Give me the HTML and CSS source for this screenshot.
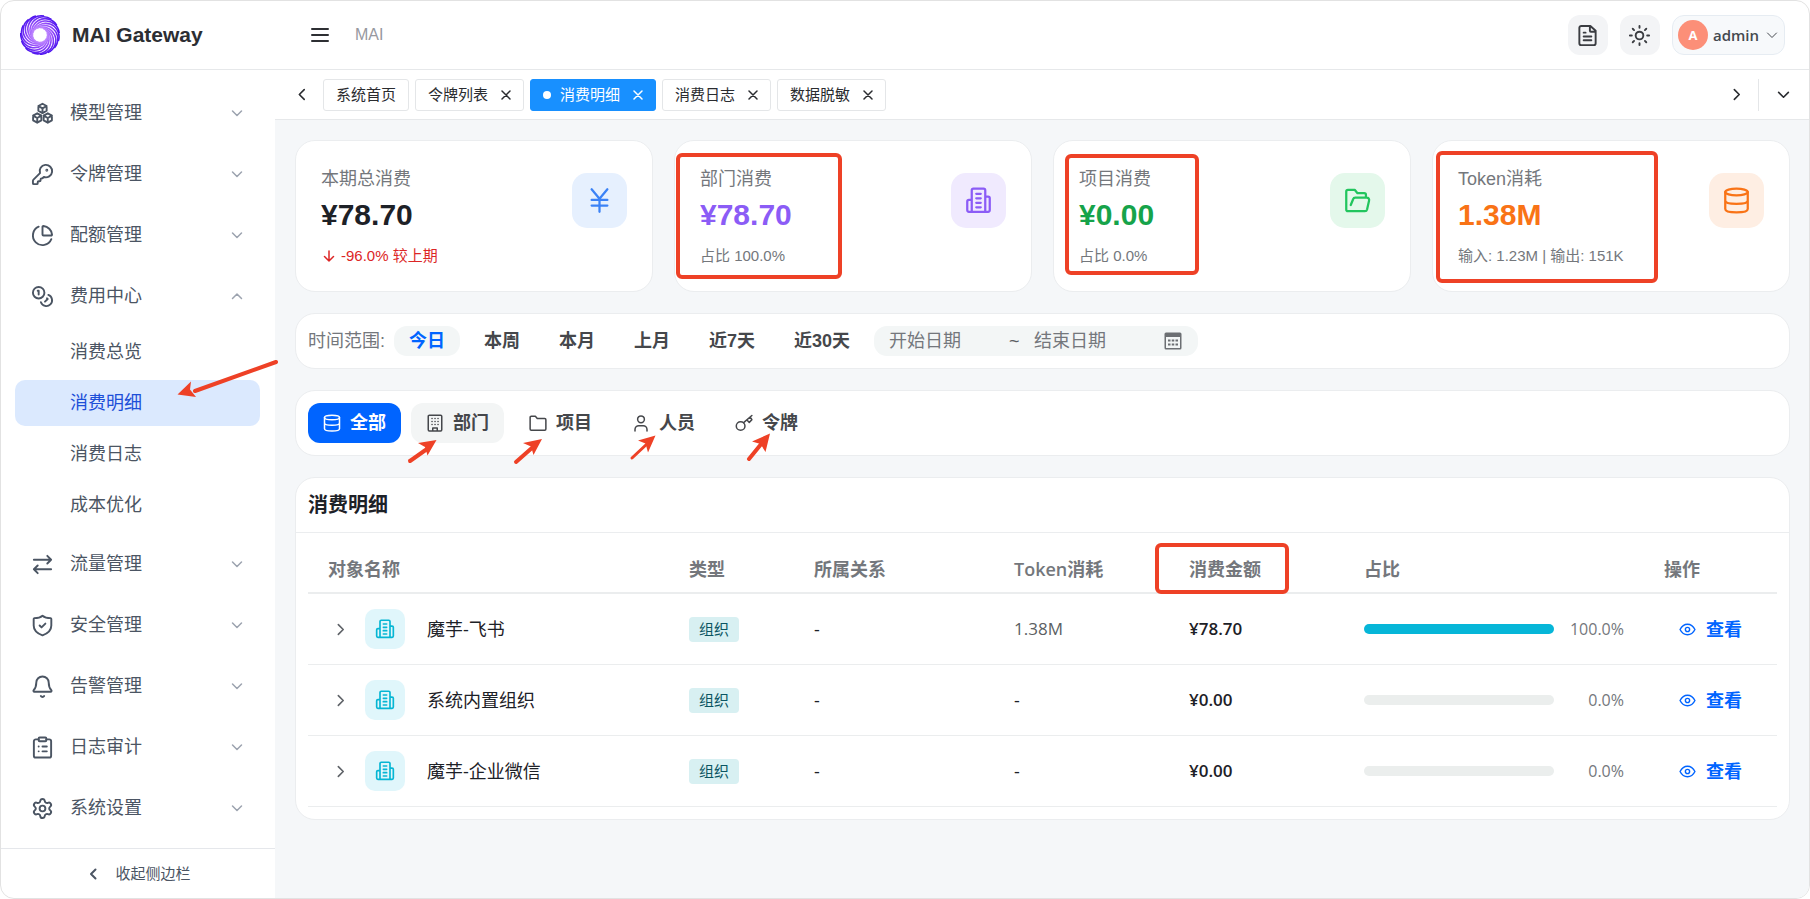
FILE: index.html
```html
<!DOCTYPE html>
<html lang="zh-CN">

<head>
    <meta charset="UTF-8">
    <meta name="viewport" content="width=device-width, initial-scale=1.0">
    <title>MAI Gateway</title>
    <link rel="stylesheet" href="styles.css">
</head>

<body>
    <!-- Icon sprite -->
    <svg class="sprite" aria-hidden="true">
        <defs>
            <radialGradient id="logo-stroke" gradientUnits="userSpaceOnUse" cx="20" cy="20" r="20">
                <stop offset="35%" stop-color="#c08bff" />
                <stop offset="65%" stop-color="#9147fa" />
                <stop offset="100%" stop-color="#4a12ee" />
            </radialGradient>
            <path id="logo-arc" d="M20 12.500A13.400 13.400 0 0 1 20 39.300" />
        </defs>
        <symbol id="i-cubes" viewBox="0 0 24 24">
            <path d="M12 1.800l4.300 2.400v4.900L12 11.600 7.700 9.100V4.200zM7.700 4.200 12 6.700l4.300-2.500M12 6.700v4.900" />
            <path d="M6.500 11.800l4.300 2.400v4.900l-4.300 2.500-4.300-2.500v-4.900zM2.200 14.200l4.300 2.500 4.300-2.500M6.500 16.700v4.900" />
            <path d="M17.500 11.800l4.300 2.400v4.900l-4.300 2.500-4.300-2.500v-4.900zM13.200 14.200l4.300 2.500 4.300-2.500M17.500 16.700v4.900" />
        </symbol>
        <symbol id="i-key" viewBox="0 0 24 24">
            <path d="M2.586 17.414A2 2 0 0 0 2 18.828V21a1 1 0 0 0 1 1h3a1 1 0 0 0 1-1v-1a1 1 0 0 1 1-1h1a1 1 0 0 0 1-1v-1a1 1 0 0 1 1-1h.172a2 2 0 0 0 1.414-.586l.814-.814a6.500 6.500 0 1 0-4-4z" />
            <circle cx="16.500" cy="7.500" r=".5" fill="currentColor" />
        </symbol>
        <symbol id="i-pie" viewBox="0 0 24 24">
            <path d="M21 12c.552 0 1.005-.449.95-.998a10 10 0 0 0-8.953-8.951c-.55-.055-.998.398-.998.950v8a1 1 0 0 0 1 1z" />
            <path d="M21.210 15.890A10 10 0 1 1 8 2.830" />
        </symbol>
        <symbol id="i-coins" viewBox="0 0 24 24">
            <circle cx="8" cy="8" r="6" />
            <path d="M18.090 10.370A6 6 0 1 1 10.340 18M7 6h1v4M16.710 13.880l.7.710-2.820 2.820" />
        </symbol>
        <symbol id="i-swap" viewBox="0 0 24 24">
            <path d="M17 3l4 4-4 4M21 7H3M7 21l-4-4 4-4M3 17h18" />
        </symbol>
        <symbol id="i-shield" viewBox="0 0 24 24">
            <path d="M12 1.800C14 3.500 17.500 4.300 20.500 4.300a1 1 0 0 1 .7 1V12c0 5.500-4.200 8.500-9.200 10.300C7 20.500 2.800 17.500 2.800 12V5.300a1 1 0 0 1 .7-1c3 0 6.500-.8 8.500-2.500zM9 12l2 2 4-4" />
        </symbol>
        <symbol id="i-bell" viewBox="0 0 24 24">
            <path d="M10.268 22a2 2 0 0 0 3.464 0M2.800 15.800A1 1 0 0 0 3.500 17.500h17a1 1 0 0 0 .7-1.700C19.500 14 18.500 12.499 18.500 8a6.500 6.500 0 0 0-13 0c0 4.499-1 6-2.700 7.800" />
        </symbol>
        <symbol id="i-clipboard" viewBox="0 0 24 24">
            <rect x="8" y="1.500" width="8" height="4" rx="1" />
            <path d="M16 3.500h3a2 2 0 0 1 2 2v15a2 2 0 0 1-2 2H5a2 2 0 0 1-2-2v-15a2 2 0 0 1 2-2h3M12 11h4.500M12 16h4.500M8 11h.01M8 16h.01" />
        </symbol>
        <symbol id="i-gear" viewBox="0 0 24 24">
            <path d="M9.671 4.136a2.340 2.340 0 0 1 4.659 0 2.340 2.340 0 0 0 3.319 1.915 2.340 2.340 0 0 1 2.330 4.033 2.340 2.340 0 0 0 0 3.831 2.340 2.340 0 0 1-2.330 4.033 2.340 2.340 0 0 0-3.319 1.915 2.340 2.340 0 0 1-4.659 0 2.340 2.340 0 0 0-3.320-1.915 2.340 2.340 0 0 1-2.330-4.033 2.340 2.340 0 0 0 0-3.831A2.340 2.340 0 0 1 6.350 6.051a2.340 2.340 0 0 0 3.319-1.915" />
            <circle cx="12" cy="12" r="3" />
        </symbol>
        <symbol id="i-file" viewBox="0 0 24 24">
            <path d="M5.500 22a2 2 0 0 1-2-2V4a2 2 0 0 1 2-2H15l5.500 5v13a2 2 0 0 1-2 2zM14.500 2v5a1 1 0 0 0 1 1H20M10 9H8M16 13H8M16 17H8" />
        </symbol>
        <symbol id="i-sun" viewBox="0 0 24 24">
            <circle cx="12" cy="12" r="4" />
            <path d="M12 2v2M12 20v2M4.930 4.930l1.410 1.410M17.660 17.660l1.410 1.410M2 12h2M20 12h2M6.340 17.660l-1.410 1.410M19.070 4.930l-1.410 1.410" />
        </symbol>
        <symbol id="i-down" viewBox="0 0 24 24"><path d="M3 8l9 9 9-9" /></symbol>
        <symbol id="i-up" viewBox="0 0 24 24"><path d="M3 17l9-9 9 9" /></symbol>
        <symbol id="i-left" viewBox="0 0 24 24"><path d="M17 3l-9 9 9 9" /></symbol>
        <symbol id="i-right" viewBox="0 0 24 24"><path d="M8 3l9 9-9 9" /></symbol>
        <symbol id="i-close" viewBox="0 0 20 20"><path d="M2 2l16 16M18 2L2 18" /></symbol>
        <symbol id="i-menu" viewBox="0 0 18 16"><path d="M1 2h16M1 8h16M1 14h16" /></symbol>
        <symbol id="i-drop" viewBox="0 0 24 24"><path d="M12 2v20M3 13l9 9 9-9" /></symbol>
        <symbol id="i-yuan" viewBox="0 0 24 24"><path d="M5 2l7 8.500L19 2M12 10.500V22M5 11.500h14M5 16.500h14" /></symbol>
        <symbol id="i-building" viewBox="0 0 24 24">
            <path d="M6 22V3a1.500 1.500 0 0 1 1.500-1.500h9A1.500 1.500 0 0 1 18 3v19M6 11.500H3.500A1.500 1.500 0 0 0 2 13v7.500A1.500 1.500 0 0 0 3.500 22h17a1.500 1.500 0 0 0 1.500-1.500V10a1.500 1.500 0 0 0-1.500-1.500H18M10 6h4M10 10h4M10 14h4M10 18h4" />
        </symbol>
        <symbol id="i-folder-open" viewBox="0 0 24 24">
            <path d="M19.500 9V7a1.500 1.500 0 0 0-1.500-1.500h-6L9.500 2.500h-6A1.500 1.500 0 0 0 2 4v16a1.500 1.500 0 0 0 1.500 1.500h15a2 2 0 0 0 2-1.500L22.300 12a2 2 0 0 0-2-2.500H10a2 2 0 0 0-1.900 1.400L6 16" />
        </symbol>
        <symbol id="i-db" viewBox="0 0 24 24">
            <ellipse cx="12" cy="4.500" rx="10" ry="3" />
            <path d="M2 4.500v15C2 21.500 6.500 22.500 12 22.500s10-1 10-3v-15M2 12c0 2 4.500 3 10 3s10-1 10-3" />
        </symbol>
        <symbol id="i-office" viewBox="0 0 24 24">
            <path d="M9 22.500H4.500a1.500 1.500 0 0 1-1.500-1.500V3a1.500 1.500 0 0 1 1.500-1.500h15A1.500 1.500 0 0 1 21 3v18a1.500 1.500 0 0 1-1.500 1.500H15M9 22.500h6v-4H9zM8 6h.1M12 6h.1M16 6h.1M8 10h.1M12 10h.1M16 10h.1M8 14h.1M12 14h.1M16 14h.1" />
        </symbol>
        <symbol id="i-folder" viewBox="0 0 24 24">
            <path d="M1.500 20V4.500a1.500 1.500 0 0 1 1.500-1.500h5.500L11 6h10a1.500 1.500 0 0 1 1.500 1.500V20a1.500 1.500 0 0 1-1.500 1.500H3A1.500 1.500 0 0 1 1.500 20z" />
        </symbol>
        <symbol id="i-user" viewBox="0 0 24 24">
            <circle cx="12" cy="7" r="4.500" />
            <path d="M4 22.500v-2a5 5 0 0 1 5-5h6a5 5 0 0 1 5 5v2" />
        </symbol>
        <symbol id="i-token" viewBox="0 0 24 24">
            <circle cx="7.500" cy="16" r="5.800" />
            <path d="M11.500 11.500L22.500 2M16 8l3 3.200 3.500-3.700-2-3.200" />
        </symbol>
        <symbol id="i-eye" viewBox="0 0 24 24">
            <path d="M1.500 12c2.500-5 6-7.500 10.500-7.500s8 2.500 10.500 7.500c-2.500 5-6 7.500-10.500 7.500S4 17 1.500 12z" />
            <circle cx="12" cy="12" r="3" />
        </symbol>
    </svg>

    <div class="app">
        <header class="header">
            <div class="brand">
                <svg class="logo" viewBox="0 0 40 40">
                    <g fill="none" stroke="url(#logo-stroke)" stroke-width="1.600">
                        <use href="#logo-arc" />
                        <use href="#logo-arc" transform="rotate(24 20 20)" />
                        <use href="#logo-arc" transform="rotate(48 20 20)" />
                        <use href="#logo-arc" transform="rotate(72 20 20)" />
                        <use href="#logo-arc" transform="rotate(96 20 20)" />
                        <use href="#logo-arc" transform="rotate(120 20 20)" />
                        <use href="#logo-arc" transform="rotate(144 20 20)" />
                        <use href="#logo-arc" transform="rotate(168 20 20)" />
                        <use href="#logo-arc" transform="rotate(192 20 20)" />
                        <use href="#logo-arc" transform="rotate(216 20 20)" />
                        <use href="#logo-arc" transform="rotate(240 20 20)" />
                        <use href="#logo-arc" transform="rotate(264 20 20)" />
                        <use href="#logo-arc" transform="rotate(288 20 20)" />
                        <use href="#logo-arc" transform="rotate(312 20 20)" />
                        <use href="#logo-arc" transform="rotate(336 20 20)" />
                    </g>
                </svg>
                <span class="brand-name">MAI Gateway</span>
            </div>
            <button class="menu-toggle" aria-label="菜单"><svg class="icon"><use href="#i-menu" /></svg></button>
            <span class="crumb">MAI</span>
            <div class="header-actions">
                <button class="square-btn" aria-label="文档"><svg class="icon"><use href="#i-file" /></svg></button>
                <button class="square-btn" aria-label="主题"><svg class="icon"><use href="#i-sun" /></svg></button>
                <button class="user-btn">
                    <span class="avatar">A</span>
                    <span class="user-name">admin</span>
                    <svg class="icon"><use href="#i-down" /></svg>
                </button>
            </div>
        </header>

        <div class="layout">
            <aside class="sidebar">
                <nav class="nav">
                    <button class="nav-item"><svg class="icon nav-icon"><use href="#i-cubes" /></svg><span>模型管理</span><svg class="icon caret"><use href="#i-down" /></svg></button>
                    <button class="nav-item"><svg class="icon nav-icon"><use href="#i-key" /></svg><span>令牌管理</span><svg class="icon caret"><use href="#i-down" /></svg></button>
                    <button class="nav-item"><svg class="icon nav-icon"><use href="#i-pie" /></svg><span>配额管理</span><svg class="icon caret"><use href="#i-down" /></svg></button>
                    <button class="nav-item"><svg class="icon nav-icon"><use href="#i-coins" /></svg><span>费用中心</span><svg class="icon caret"><use href="#i-up" /></svg></button>
                    <div class="sub-nav">
                        <a class="sub-item" href="#">消费总览</a>
                        <a class="sub-item active" href="#">消费明细
                            <svg class="arrow"><path class="shaft" d="M261 -18L180 11" /><path class="head" d="M162.500 14.500L176 1.500 175 9.500 181 17z" /></svg>
                        </a>
                        <a class="sub-item" href="#">消费日志</a>
                        <a class="sub-item" href="#">成本优化</a>
                    </div>
                    <button class="nav-item"><svg class="icon nav-icon"><use href="#i-swap" /></svg><span>流量管理</span><svg class="icon caret"><use href="#i-down" /></svg></button>
                    <button class="nav-item"><svg class="icon nav-icon"><use href="#i-shield" /></svg><span>安全管理</span><svg class="icon caret"><use href="#i-down" /></svg></button>
                    <button class="nav-item"><svg class="icon nav-icon"><use href="#i-bell" /></svg><span>告警管理</span><svg class="icon caret"><use href="#i-down" /></svg></button>
                    <button class="nav-item"><svg class="icon nav-icon"><use href="#i-clipboard" /></svg><span>日志审计</span><svg class="icon caret"><use href="#i-down" /></svg></button>
                    <button class="nav-item"><svg class="icon nav-icon"><use href="#i-gear" /></svg><span>系统设置</span><svg class="icon caret"><use href="#i-down" /></svg></button>
                </nav>
                <button class="collapse"><svg class="icon"><use href="#i-left" /></svg>收起侧边栏</button>
            </aside>

            <div class="main">
                <div class="tabs">
                    <button class="tabs-arrow" aria-label="向左"><svg class="icon"><use href="#i-left" /></svg></button>
                    <div class="tab-list">
                        <button class="tab">系统首页</button>
                        <button class="tab">令牌列表<svg class="icon"><use href="#i-close" /></svg></button>
                        <button class="tab current"><i class="dot"></i>消费明细<svg class="icon"><use href="#i-close" /></svg></button>
                        <button class="tab">消费日志<svg class="icon"><use href="#i-close" /></svg></button>
                        <button class="tab">数据脱敏<svg class="icon"><use href="#i-close" /></svg></button>
                    </div>
                    <button class="tabs-arrow" aria-label="向右"><svg class="icon"><use href="#i-right" /></svg></button>
                    <button class="tabs-more" aria-label="更多"><svg class="icon"><use href="#i-down" /></svg></button>
                </div>

                <main class="content">
                    <section class="stats">
                        <div class="card stat">
                            <div class="stat-top">
                                <div>
                                    <div class="stat-label">本期总消费</div>
                                    <div class="stat-value">¥78.70</div>
                                </div>
                                <div class="stat-icon blue"><svg class="icon"><use href="#i-yuan" /></svg></div>
                            </div>
                            <div class="stat-note down"><svg class="icon"><use href="#i-drop" /></svg>-96.0% 较上期</div>
                        </div>
                        <div class="card stat">
                            <div class="stat-top">
                                <div>
                                    <div class="stat-label">部门消费</div>
                                    <div class="stat-value purple-text">¥78.70</div>
                                </div>
                                <div class="stat-icon purple"><svg class="icon"><use href="#i-building" /></svg></div>
                            </div>
                            <div class="stat-note">占比 100.0%</div>
                            <span class="mark mark-dept"></span>
                        </div>
                        <div class="card stat">
                            <div class="stat-top">
                                <div>
                                    <div class="stat-label">项目消费</div>
                                    <div class="stat-value green-text">¥0.00</div>
                                </div>
                                <div class="stat-icon green"><svg class="icon"><use href="#i-folder-open" /></svg></div>
                            </div>
                            <div class="stat-note">占比 0.0%</div>
                            <span class="mark mark-project"></span>
                        </div>
                        <div class="card stat">
                            <div class="stat-top">
                                <div>
                                    <div class="stat-label">Token消耗</div>
                                    <div class="stat-value orange-text">1.38M</div>
                                </div>
                                <div class="stat-icon orange"><svg class="icon"><use href="#i-db" /></svg></div>
                            </div>
                            <div class="stat-note">输入: 1.23M | 输出: 151K</div>
                            <span class="mark mark-token"></span>
                        </div>
                    </section>

                    <section class="card bar range-bar">
                        <span class="range-label">时间范围:</span>
                        <button class="range on">今日</button>
                        <button class="range">本周</button>
                        <button class="range">本月</button>
                        <button class="range">上月</button>
                        <button class="range">近7天</button>
                        <button class="range">近30天</button>
                        <div class="dates">
                            <input type="text" placeholder="开始日期" aria-label="开始日期">
                            <span class="tilde">~</span>
                            <input type="text" placeholder="结束日期" aria-label="结束日期">
                            <svg class="calendar" viewBox="0 0 18 18">
                                <path d="M2 .5h14A1.500 1.500 0 0 1 17.500 2v14a1.500 1.500 0 0 1-1.500 1.500H2A1.500 1.500 0 0 1 .5 16V2A1.500 1.500 0 0 1 2 .5zM2 5v11h14V5z" fill-rule="evenodd" />
                                <path d="M4 7.500h2.500v2H4zM7.750 7.500h2.500v2h-2.500zM11.500 7.500H14v2h-2.500zM4 11.500h2.500v2H4zM7.750 11.500h2.500v2h-2.500zM11.500 11.500H14v2h-2.500z" />
                            </svg>
                        </div>
                    </section>

                    <section class="card bar type-bar">
                        <button class="type primary"><svg class="icon"><use href="#i-db" /></svg>全部</button>
                        <button class="type hover"><svg class="icon"><use href="#i-office" /></svg>部门
                            <svg class="arrow"><path class="shaft" d="M-1 58L16 46" /><path class="head" d="M25.500 37L7 40 14 44 16.500 52.500z" /></svg>
                        </button>
                        <button class="type"><svg class="icon"><use href="#i-folder" /></svg>项目
                            <svg class="arrow"><path class="shaft" d="M2 59L19 44" /><path class="head" d="M28 36L9 40 17 43.500 19.500 52z" /></svg>
                        </button>
                        <button class="type"><svg class="icon"><use href="#i-user" /></svg>人员
                            <svg class="arrow"><path class="shaft thin" d="M15 55L31 40" /><path class="head" d="M38.500 32.500L21 37.500 28.500 40.500 31 49.500z" /></svg>
                        </button>
                        <button class="type"><svg class="icon"><use href="#i-token" /></svg>令牌
                            <svg class="arrow"><path class="shaft" d="M29 56L42 40" /><path class="head" d="M50 30.500L32 38.500 40.500 41 45.500 49z" /></svg>
                        </button>
                    </section>

                    <section class="card detail">
                        <h2>消费明细</h2>
                        <div class="table-wrap">
                            <table>
                                <colgroup>
                                    <col>
                                    <col class="c-type">
                                    <col class="c-rel">
                                    <col class="c-num">
                                    <col class="c-num">
                                    <col class="c-share">
                                    <col class="c-act">
                                </colgroup>
                                <thead>
                                    <tr>
                                        <th>对象名称</th>
                                        <th>类型</th>
                                        <th>所属关系</th>
                                        <th>Token消耗</th>
                                        <th class="amount-head">消费金额<span class="mark mark-amount"></span></th>
                                        <th>占比</th>
                                        <th>操作</th>
                                    </tr>
                                </thead>
                                <tbody>
                                    <tr>
                                        <td>
                                            <div class="name">
                                                <button class="expand" aria-label="展开"><svg class="icon"><use href="#i-right" /></svg></button>
                                                <span class="org"><svg class="icon"><use href="#i-building" /></svg></span>
                                                <span>魔芋-飞书</span>
                                            </div>
                                        </td>
                                        <td><span class="tag">组织</span></td>
                                        <td>-</td>
                                        <td class="muted">1.38M</td>
                                        <td class="amount">¥78.70</td>
                                        <td><div class="share"><div class="track"><div class="fill" style="width: 100%"></div></div><span>100.0%</span></div></td>
                                        <td><a class="view" href="#"><svg class="icon"><use href="#i-eye" /></svg>查看</a></td>
                                    </tr>
                                    <tr>
                                        <td>
                                            <div class="name">
                                                <button class="expand" aria-label="展开"><svg class="icon"><use href="#i-right" /></svg></button>
                                                <span class="org"><svg class="icon"><use href="#i-building" /></svg></span>
                                                <span>系统内置组织</span>
                                            </div>
                                        </td>
                                        <td><span class="tag">组织</span></td>
                                        <td>-</td>
                                        <td>-</td>
                                        <td class="amount">¥0.00</td>
                                        <td><div class="share"><div class="track"><div class="fill" style="width: 0%"></div></div><span>0.0%</span></div></td>
                                        <td><a class="view" href="#"><svg class="icon"><use href="#i-eye" /></svg>查看</a></td>
                                    </tr>
                                    <tr>
                                        <td>
                                            <div class="name">
                                                <button class="expand" aria-label="展开"><svg class="icon"><use href="#i-right" /></svg></button>
                                                <span class="org"><svg class="icon"><use href="#i-building" /></svg></span>
                                                <span>魔芋-企业微信</span>
                                            </div>
                                        </td>
                                        <td><span class="tag">组织</span></td>
                                        <td>-</td>
                                        <td>-</td>
                                        <td class="amount">¥0.00</td>
                                        <td><div class="share"><div class="track"><div class="fill" style="width: 0%"></div></div><span>0.0%</span></div></td>
                                        <td><a class="view" href="#"><svg class="icon"><use href="#i-eye" /></svg>查看</a></td>
                                    </tr>
                                </tbody>
                            </table>
                        </div>
                    </section>
                </main>
            </div>
        </div>
    </div>
</body>

</html>
```

FILE: styles.css
```css
* {
    box-sizing: border-box;
}

body {
    margin: 0;
    background: #fff;
    font-family: "Liberation Sans", "Noto Sans CJK SC", sans-serif;
    font-size: 18px;
    line-height: 26px;
    color: #1d2127;
}

button,
input {
    padding: 0;
    border: 0;
    background: none;
    font: inherit;
    color: inherit;
}

a {
    color: inherit;
    text-decoration: none;
}

.sprite {
    position: absolute;
    width: 0;
    height: 0;
}

.icon {
    flex: none;
    fill: none;
    stroke: currentColor;
    stroke-width: 2;
    stroke-linecap: round;
    stroke-linejoin: round;
}

.app {
    display: flex;
    flex-direction: column;
    min-height: 100vh;
    border: 1px solid #e2e2e2;
    border-radius: 14px;
    overflow: hidden;
}

/* Header */
.header {
    display: flex;
    align-items: center;
    height: 69px;
    padding-right: 24px;
    border-bottom: 1px solid #e6e8ea;
}

.brand {
    display: flex;
    align-items: center;
    gap: 12px;
    width: 310px;
    padding-left: 19px;
}

.logo {
    width: 40px;
    height: 40px;
}

.brand-name {
    font-size: 21px;
    font-weight: bold;
    color: #2c2e33;
}

.menu-toggle {
    display: flex;
    margin-right: 26px;
    color: #2d2f33;
}

.menu-toggle .icon {
    width: 18px;
    height: 16px;
}

.crumb {
    font-size: 16px;
    color: #97999f;
}

.header-actions {
    display: flex;
    gap: 12px;
    margin-left: auto;
}

.square-btn {
    display: flex;
    align-items: center;
    justify-content: center;
    width: 40px;
    height: 40px;
    border-radius: 12px;
    background: #f3f4f6;
    color: #3b3d42;
}

.square-btn .icon {
    width: 23px;
    height: 23px;
}

.user-btn {
    display: flex;
    align-items: center;
    height: 40px;
    padding: 0 6px 0 5px;
    border: 1px solid #e6ecf2;
    border-radius: 12px;
    background: #f7f9fb;
    font-family: "Open Sans", sans-serif;
    font-size: 15px;
    font-weight: 600;
    color: #45494f;
}

.avatar {
    width: 30px;
    margin-right: 5px;
    border-radius: 50%;
    background: #fc8f78;
    font-size: 13px;
    font-weight: bold;
    line-height: 30px;
    color: #fff;
}

.user-btn .icon {
    width: 12px;
    height: 12px;
    margin-left: 7px;
}

.layout {
    display: flex;
    flex: 1;
}

/* Sidebar */
.sidebar {
    display: flex;
    flex-direction: column;
    width: 274px;
    color: #4b5563;
}

.nav {
    display: flex;
    flex: 1;
    flex-direction: column;
    gap: 5px;
    padding: 15px 15px 0 14px;
}

.nav-item {
    display: flex;
    align-items: center;
    gap: 16px;
    height: 56px;
    padding: 0 17px 0 16px;
}

.nav-icon {
    width: 23px;
    height: 23px;
}

.caret {
    width: 12px;
    height: 12px;
    margin-left: auto;
    stroke-width: 3;
    color: #9ca3af;
}

.sub-nav {
    display: flex;
    flex-direction: column;
    gap: 5px;
    padding-bottom: 3px;
}

.sub-item {
    position: relative;
    padding: 10px 0 10px 55px;
    border-radius: 10px;
}

.sub-item.active {
    background: #dbe9fe;
    color: #1d4fd8;
}

.collapse {
    display: flex;
    align-items: center;
    justify-content: center;
    gap: 16px;
    height: 50px;
    padding-left: 2px;
    border-top: 1px solid #e5e7eb;
    font-size: 15px;
}

.collapse .icon {
    width: 12px;
    height: 12px;
    stroke-width: 4;
}

/* Page tabs */
.main {
    display: flex;
    flex: 1;
    flex-direction: column;
    min-width: 0;
    background: #f5f7f9;
}

.tabs {
    display: flex;
    align-items: center;
    height: 50px;
    padding: 0 19px 0 20px;
    border-bottom: 1px solid #e6e8ea;
    background: #fff;
    color: #2a2c30;
}

.tabs-arrow {
    display: flex;
}

.tabs-arrow .icon,
.tabs-more .icon {
    width: 13px;
    height: 13px;
    stroke-width: 3;
}

.tab-list {
    display: flex;
    flex: 1;
    gap: 6px;
    padding: 0 15px;
}

.tab {
    display: flex;
    align-items: center;
    height: 32px;
    padding: 0 12px;
    border: 1px solid #e4e6e8;
    border-radius: 3px;
    font-size: 15px;
}

.tab .icon {
    width: 10px;
    height: 10px;
    margin-left: 13px;
    stroke-width: 3;
}

.tab.current {
    border-color: #1890ff;
    background: #1890ff;
    color: #fff;
}

.dot {
    width: 8px;
    height: 8px;
    margin-right: 9px;
    border-radius: 50%;
    background: #fff;
}

.tabs-more {
    display: flex;
    align-items: center;
    height: 32px;
    margin-left: 15px;
    padding-left: 18px;
    border-left: 1px solid #e4e6e8;
}

/* Content */
.content {
    display: flex;
    flex-direction: column;
    gap: 21px;
    padding: 20px 19px 20px 20px;
}

.card {
    border: 1px solid #ebedef;
    border-radius: 20px;
    background: #fff;
}

.stats {
    display: grid;
    grid-template-columns: repeat(4, 1fr);
    gap: 21px;
}

.stat {
    position: relative;
    padding: 25px;
}

.stat-top {
    display: flex;
    align-items: center;
    justify-content: space-between;
}

.stat-label {
    margin-bottom: 3px;
    color: #74777c;
}

.stat-value {
    font-size: 30px;
    font-weight: bold;
    line-height: 40px;
}

.stat-icon {
    display: flex;
    align-items: center;
    justify-content: center;
    width: 55px;
    height: 55px;
    border-radius: 15px;
}

.stat-icon .icon {
    width: 27px;
    height: 27px;
}

.blue {
    background: #e6f0fe;
    color: #3b82f6;
}

.purple {
    background: #f0eafe;
    color: #8b5cf6;
}

.green {
    background: #e4f8eb;
    color: #22c55e;
}

.orange {
    background: #feeee3;
    color: #f97316;
}

.purple-text {
    color: #8b5cf6;
}

.green-text {
    color: #16a34a;
}

.orange-text {
    color: #f97316;
}

.stat-note {
    display: flex;
    align-items: center;
    margin-top: 11px;
    font-size: 15px;
    line-height: 20px;
    color: #74777c;
}

.stat-note.down {
    color: #dc2626;
}

.stat-note .icon {
    width: 12px;
    height: 12px;
    margin: 0 6px 0 2px;
    stroke-width: 3;
}

.bar {
    display: flex;
    align-items: center;
    padding: 12px;
}

.range-bar {
    gap: 9px;
}

.range-label {
    color: #74777c;
}

.range {
    height: 30px;
    padding: 0 15px;
    border-radius: 13px;
    font-weight: bold;
    color: #45474b;
}

.range.on {
    background: #f3f6f6;
    color: #0064ff;
}

.dates {
    display: flex;
    align-items: center;
    width: 324px;
    height: 30px;
    padding: 0 16px 0 15px;
    border-radius: 13px;
    background: #f3f6f6;
}

.dates input {
    width: 120px;
    height: 30px;
}

.dates input::placeholder {
    color: #74777c;
    opacity: 1;
}

.tilde {
    width: 25px;
    color: #5c5f63;
}

.calendar {
    width: 18px;
    height: 18px;
    margin-left: auto;
    fill: #6c6f73;
}

.type-bar {
    gap: 10px;
}

.type {
    position: relative;
    display: flex;
    align-items: center;
    gap: 9px;
    height: 40px;
    padding: 0 15px;
    border-radius: 12px;
    font-weight: bold;
    color: #45474b;
}

.type .icon {
    width: 18px;
    height: 18px;
}

.type.primary {
    background: #0064ff;
    color: #fff;
}

.type.hover {
    background: #f3f5f5;
}

/* Detail table */
.detail h2 {
    margin: 0;
    padding: 14px 12px;
    border-bottom: 1px solid #ebedef;
    font-size: 20px;
}

.table-wrap {
    padding: 12px;
}

table {
    width: 100%;
    border-collapse: separate;
    border-spacing: 0;
    table-layout: fixed;
    font-family: "Open Sans", "Noto Sans CJK SC", sans-serif;
}

.c-type {
    width: 125px;
}

.c-rel {
    width: 200px;
}

.c-num {
    width: 175px;
}

.c-share {
    width: 300px;
}

.c-act {
    width: 133px;
}

th,
td {
    padding: 0 20px;
    text-align: left;
}

th {
    height: 49px;
    border-bottom: 2px solid #ebedee;
    font-weight: 600;
    color: #74777c;
}

td {
    height: 71px;
    border-bottom: 1px solid #ebedee;
}

.amount-head {
    position: relative;
}

.name {
    display: flex;
    align-items: center;
}

.expand {
    display: flex;
    justify-content: center;
    width: 24px;
    margin-right: 13px;
    color: #5f6368;
}

.expand .icon {
    width: 13px;
    height: 13px;
    stroke-width: 3;
}

.org {
    display: flex;
    align-items: center;
    justify-content: center;
    width: 40px;
    height: 40px;
    margin-right: 22px;
    border-radius: 10px;
    background: #e0f6fb;
    color: #06b6d4;
}

.org .icon {
    width: 20px;
    height: 20px;
}

.tag {
    display: block;
    width: 50px;
    border-radius: 4px;
    background: #d8f0f2;
    font-size: 15px;
    line-height: 25px;
    text-align: center;
    color: #0b5563;
}

.muted {
    font-size: 17px;
    color: #5c5f63;
}

.amount {
    font-size: 17px;
    font-weight: 600;
}

.share {
    display: flex;
    align-items: center;
}

.track {
    flex: 1;
    height: 10px;
    border-radius: 5px;
    background: #ebeeed;
    overflow: hidden;
}

.fill {
    height: 100%;
    background: #06b6d8;
}

.share span {
    width: 70px;
    font-size: 16px;
    text-align: right;
    color: #74777c;
}

.view {
    display: flex;
    align-items: center;
    gap: 10px;
    padding-left: 15px;
    font-weight: bold;
    color: #0064ff;
}

.view .icon {
    width: 17px;
    height: 17px;
}

/* Red guide marks */
.mark {
    position: absolute;
    border: 4px solid #ee4126;
    border-radius: 6px;
    pointer-events: none;
}

.mark-dept {
    top: 12px;
    left: 1px;
    width: 166px;
    height: 126px;
}

.mark-project {
    top: 13px;
    left: 11px;
    width: 134px;
    height: 121px;
}

.mark-token {
    top: 10px;
    left: 3px;
    width: 222px;
    height: 132px;
}

.mark-amount {
    top: -2px;
    left: -14px;
    width: 134px;
    height: 51px;
}

.arrow {
    position: absolute;
    top: 0;
    left: 0;
    z-index: 1;
    width: 100%;
    height: 100%;
    overflow: visible;
    pointer-events: none;
}

.shaft {
    fill: none;
    stroke: #ee4126;
    stroke-width: 4;
    stroke-linecap: round;
}

.shaft.thin {
    stroke-width: 3;
}

.head {
    fill: #ee4126;
}
```
